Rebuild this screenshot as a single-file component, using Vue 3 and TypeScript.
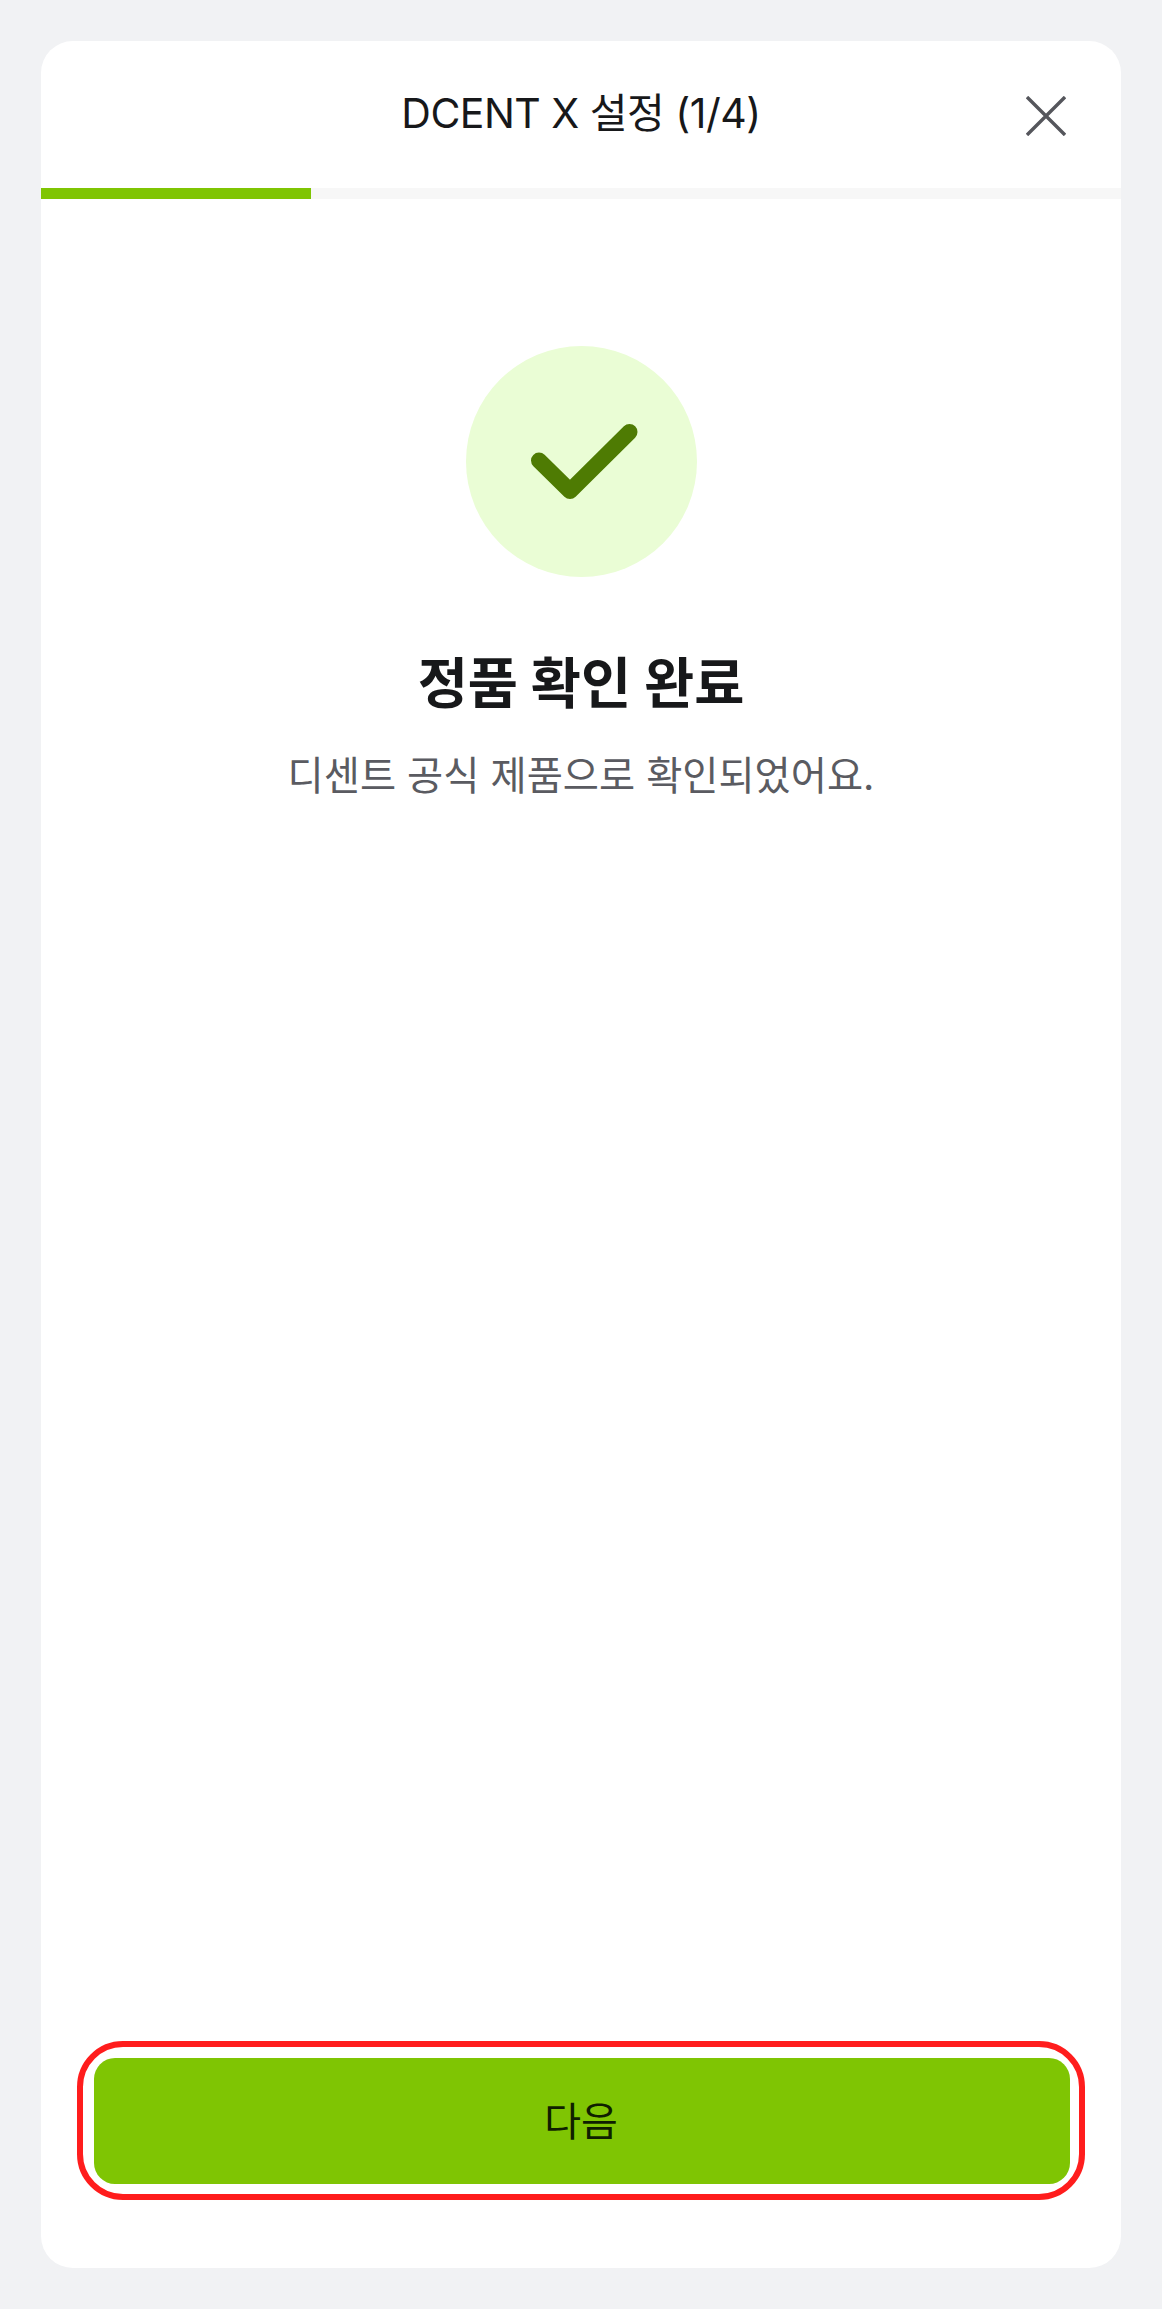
<script setup lang="ts">
const title = 'DCENT X 설정 (1/4)'
const heading = '정품 확인 완료'
const description = '디센트 공식 제품으로 확인되었어요.'
const progress = 25
</script>

<template>
  <div class="page">
    <main class="card">
      <header class="header">
        <span></span>
        <h1 class="title">{{ title }}</h1>
        <button class="close" type="button" aria-label="닫기">
          <svg width="40" height="40" viewBox="0 0 40 40" fill="none">
            <path d="M1 1L39 39M39 1L1 39" stroke="#55565c" stroke-width="3.4" />
          </svg>
        </button>
      </header>
      <div class="track"><div class="bar" :style="{ width: progress + '%' }"></div></div>
      <section class="content">
        <div class="badge">
          <svg width="120" height="90" viewBox="0 0 120 90" fill="none">
            <path d="M18 43.5L49 74L108.5 15" stroke="#4e7b03" stroke-width="16" stroke-linecap="round" stroke-linejoin="round" />
          </svg>
        </div>
        <h2 class="heading">{{ heading }}</h2>
        <p class="description">{{ description }}</p>
      </section>
      <footer class="footer">
        <div class="focus-ring">
          <button class="next" type="button">다음</button>
        </div>
      </footer>
    </main>
  </div>
</template>

<style>
html, body { margin: 0; padding: 0; background: #f1f2f4; }
</style>

<style scoped>
.page {
  box-sizing: border-box;
  height: 2309px;
  padding: 41px;
  background: #f1f2f4;
  display: flex;
  font-family: Inter, "Noto Sans CJK KR", sans-serif;
}
.card {
  flex: 1;
  display: flex;
  flex-direction: column;
  background: #fff;
  border-radius: 32px;
  overflow: hidden;
}
.header {
  height: 147px;
  display: grid;
  grid-template-columns: 1fr auto 1fr;
  align-items: center;
}
.title {
  margin: 0 0 9px;
  font-size: 41px;
  letter-spacing: -0.5px;
  font-weight: 400;
  color: #17181a;
  white-space: nowrap;
}
.close {
  justify-self: end;
  margin: 2px 55px 0 0;
  padding: 0;
  border: 0;
  background: none;
  display: flex;
}
.track { height: 11px; background: #f7f7f7; }
.bar { height: 100%; background: #7fc503; }
.content {
  flex: 1;
  display: flex;
  flex-direction: column;
  align-items: center;
  padding-top: 147px;
}
.badge {
  width: 231px;
  height: 231px;
  border-radius: 50%;
  background: #eafdd5;
  display: flex;
  align-items: center;
  justify-content: center;
}
.heading {
  margin: 64px 0 0;
  font-size: 54.5px;
  line-height: 84px;
  font-weight: 700;
  color: #17181a;
}
.description {
  margin: 23px 0 0;
  font-size: 39.3px;
  line-height: 56px;
  color: #5a5b61;
}
.footer { padding: 0 36px 68px; }
.focus-ring {
  border: 6px solid #ff1d1d;
  border-radius: 46px;
  padding: 11px 9px 10px 11px;
}
.next {
  display: block;
  box-sizing: border-box;
  width: 100%;
  height: 126px;
  padding: 0 2px 5px 0;
  border: 0;
  border-radius: 21px;
  background: #7fc503;
  color: #0f1f00;
  font: 400 40px Inter, "Noto Sans CJK KR", sans-serif;
}
</style>
